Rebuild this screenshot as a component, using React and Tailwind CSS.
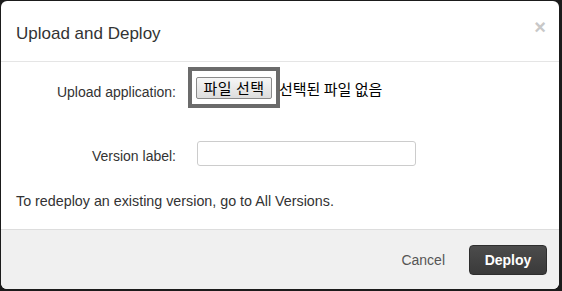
export default function App() {
  return (
    <div className="w-[562px] h-[291px] bg-[#1b1b1b] pt-px pl-px overflow-hidden font-['Liberation_Sans','Noto_Sans_CJK_KR',sans-serif]">
      <div className="w-[558px] h-[288px] bg-white rounded-[6px] flex flex-col overflow-hidden">
        {/* Header */}
        <div className="relative h-[61px] shrink-0 border-b border-[#e5e5e5] pl-[15px] pt-[23px]">
          <div className="text-[17px] leading-[20px] text-[#333]">Upload and Deploy</div>
          <div className="absolute right-[13px] top-[16px] text-[20px] leading-[20px] font-bold text-[#c8c8c8]">×</div>
        </div>
        {/* Body */}
        <div className="flex-1 flex flex-col text-[14px] text-[#333]">
          <div className="flex items-center mt-[5px]">
            <div className="w-[175px] text-right pt-[8px] leading-[20px]">Upload application:</div>
            <div className="ml-[12px] border-[4px] border-[#6b6b6b] pt-[6px] pb-[5px] px-[4px]">
              <div className="w-[76px] h-[22px] border border-[#8a8a8a] rounded-[2px] bg-gradient-to-b from-[#f6f6f6] to-[#dddddd] flex items-center justify-center text-[15px] leading-[20px] tracking-[0.5px] text-black font-['Noto_Sans_CJK_KR',sans-serif]">
                파일 선택
              </div>
            </div>
            <div className="ml-[-1px] text-[15px] leading-[20px] text-black font-['Noto_Sans_CJK_KR',sans-serif] pt-[2px]">
              선택된 파일 없음
            </div>
          </div>
          <div className="flex items-center mt-[33px]">
            <div className="w-[175px] text-right pt-[5px] leading-[20px]">Version label:</div>
            <div className="ml-[21px] w-[219px] h-[25px] border border-[#cccccc] rounded-[3px] bg-white"></div>
          </div>
          <div className="mt-[25px] pl-[15px] leading-[20px] text-[14.3px]">
            To redeploy an existing version, go to All Versions.
          </div>
        </div>
        {/* Footer */}
        <div className="h-[60px] shrink-0 border-t border-[#dddddd] bg-[#f0f0f0] flex items-center justify-end pr-[12px]">
          <div className="text-[14px] text-[#555] mr-[24px] pt-[2px]">Cancel</div>
          <div className="w-[78px] h-[30px] rounded-[4px] border border-[#2e2e2e] bg-gradient-to-b from-[#4c4c4c] to-[#3a3a3a] flex items-center justify-center text-white font-bold text-[14px] mt-[1px]">
            Deploy
          </div>
        </div>
      </div>
    </div>
  );
}
